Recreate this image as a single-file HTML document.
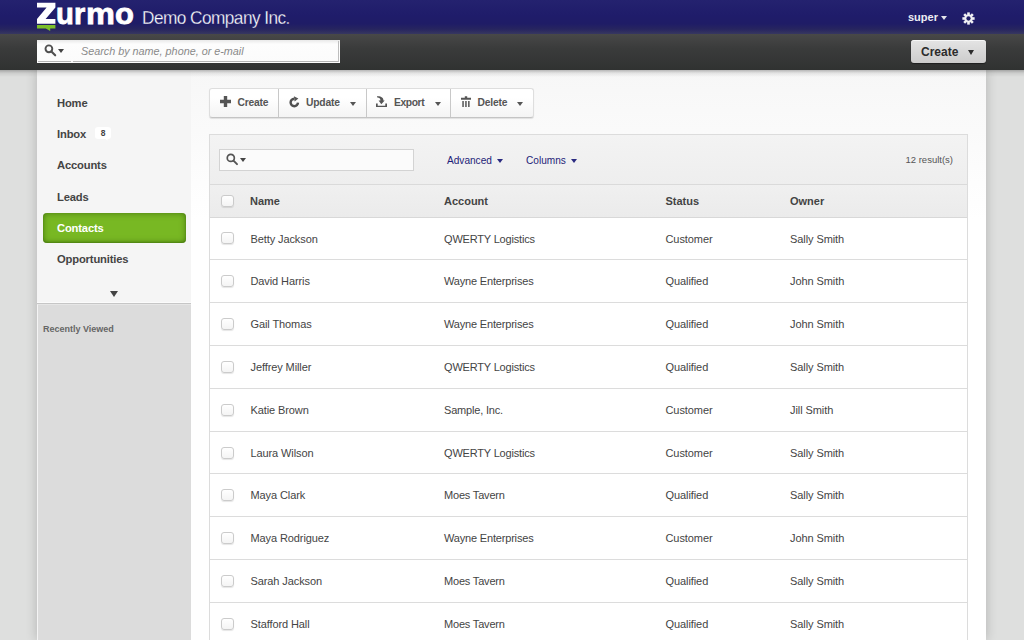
<!DOCTYPE html>
<html>
<head>
<meta charset="utf-8">
<title>Contacts</title>
<style>
*{box-sizing:border-box;margin:0;padding:0}
html,body{width:1024px;height:640px;overflow:hidden}
body{background:#dedfde;font-family:"Liberation Sans",sans-serif;font-size:11px;color:#444;position:relative}
.abs{position:absolute}
#blue{left:0;top:0;width:1024px;height:34px;background:linear-gradient(#24226f 0%,#1f1c6a 45%,#1f1c66 70%,#27255f 86%,#373760 100%)}
#dark{left:0;top:34px;width:1024px;height:36px;background:linear-gradient(#484848 0%,#3a3b3b 40%,#303231 100%)}
#hshadow{left:0;top:70px;width:1024px;height:7px;background:linear-gradient(rgba(0,0,0,.26),rgba(0,0,0,.08) 45%,rgba(0,0,0,0));z-index:5}
#wrap{left:37px;top:70px;width:949px;height:570px;background:#fff;box-shadow:0 0 11px rgba(0,0,0,.2)}
#maingrad{left:191px;top:70px;width:795px;height:150px;background:linear-gradient(#f7f7f7,#fafafa 40%,#fff)}
#side{left:37px;top:70px;width:154px;height:233px;background:#f5f5f5}
#sideline{left:37px;top:302px;width:154px;height:2px;background:linear-gradient(#fbfbfb 0,#fbfbfb 50%,#c6c6c6 50%,#c6c6c6 100%)}
#side2{left:37px;top:304px;width:154px;height:336px;background:#dcdcdc;border-left:1px solid #f4f4f4;border-top:1px solid #e6e6e6}
.nav{left:57px;font-weight:bold;font-size:11.2px;letter-spacing:-.15px;color:#444;white-space:nowrap;line-height:14px}
#active{left:43px;top:213px;width:143px;height:30px;border-radius:4px;background:#78b823;box-shadow:inset 0 0 6px rgba(40,80,0,.6),inset 0 -1px 2px rgba(40,80,0,.35)}
#badge{left:95px;top:127px;width:16px;height:12px;background:#fff;border-radius:3px;font-size:8.5px;font-weight:bold;color:#444;text-align:center;line-height:12px}
#rv{left:43px;top:324px;font-size:9px;font-weight:bold;color:#666;white-space:nowrap;line-height:11px}
/* logo */
.lt{top:-3.5px;font-weight:bold;color:#fff;font-size:29.8px;line-height:33px;white-space:nowrap;-webkit-text-stroke:.8px #fff;transform-origin:0 0}
#company{left:142px;top:7px;color:#fff;font-size:18.6px;line-height:22px;white-space:nowrap;letter-spacing:-.6px;transform-origin:0 0;transform:scaleX(.928);-webkit-text-stroke:.3px #211e6e}
#user{left:908px;top:11px;color:#ececf2;font-weight:bold;font-size:11px;line-height:13px;white-space:nowrap}
/* search */
#gs{left:37px;top:40px;width:303px;height:23px;background:linear-gradient(#e9e9e9,#fdfdfd 18%,#fbfbfb)}
#gsline{left:38px;top:41px;width:301px;height:21px;border-bottom:1px solid #b4b4b4;border-right:1px solid #bdbdbd}
#gsdiv{left:71px;top:61px;width:2px;height:1px;background:#f4f4f4}
#gstxt{left:81px;top:44px;font-style:italic;font-size:10.8px;color:#8a8a8a;white-space:nowrap;line-height:14px}
#createbtn{left:911px;top:40px;width:75px;height:23px;border-radius:3px;background:linear-gradient(#e4e4e4,#cccccc);box-shadow:0 1px 1px rgba(0,0,0,.4),inset 0 1px 0 rgba(255,255,255,.7)}
#createtxt{left:921px;top:45px;font-weight:bold;font-size:12px;color:#2c2c2c;line-height:15px;white-space:nowrap}
/* toolbar */
#tb{left:209px;top:88px;width:325px;height:30px;background:linear-gradient(#fff 30%,#f4f4f4);border:1px solid #dedede;border-bottom-color:#c4c4c4;border-radius:3px;box-shadow:0 1px 1px rgba(0,0,0,.1)}
.tbdiv{top:89px;width:1px;height:28px;background:#c8c8c8}
.tbt{top:96.3px;font-weight:bold;font-size:10.3px;letter-spacing:-.2px;color:#555;line-height:13px;white-space:nowrap}
.car{width:0;height:0;border-left:3px solid transparent;border-right:3px solid transparent;border-top:4px solid #555}
/* panel */
#panel{left:209px;top:134px;width:759px;height:506px;background:#fff;border:1px solid #dcdcdc;border-bottom:none}
#psearch{left:210px;top:135px;width:757px;height:49px;background:linear-gradient(#f3f3f3,#eeeeee)}
#pline{left:210px;top:184px;width:757px;height:1px;background:#dadada}
#phead{left:210px;top:185px;width:757px;height:32px;background:linear-gradient(#f0f0f0,#ebebeb)}
#pline2{left:210px;top:217px;width:757px;height:1px;background:#d8d8d8}
#pin{left:219px;top:149px;width:195px;height:22px;background:#fbfbfb;border:1px solid #d3d3d3}
.lnk{top:154px;color:#1d1d78;font-size:10.1px;line-height:13px;white-space:nowrap}
.carb{width:0;height:0;border-left:3px solid transparent;border-right:3px solid transparent;border-top:4px solid #2a2a80}
#res{left:905.5px;top:153px;font-size:9.5px;color:#555;line-height:13px;white-space:nowrap}
.th{top:195px;font-weight:bold;font-size:11px;color:#444;line-height:13px;white-space:nowrap}
.td{font-size:11px;color:#444;line-height:13px;white-space:nowrap}
.rl{left:210px;width:757px;height:1px;background:#dcdcdc}
.cb{left:221px;width:13px;height:12px;border:1px solid #cbcbcb;border-radius:3px;background:linear-gradient(#fff,#f4f4f4);box-shadow:0 1px 1px rgba(0,0,0,.1)}
</style>
</head>
<body>
<div class="abs" id="wrap"></div>
<div class="abs" id="maingrad"></div>
<div class="abs" id="side"></div>
<div class="abs" id="side2"></div>
<div class="abs" id="sideline"></div>
<div class="abs" id="blue"></div>
<div class="abs" id="dark"></div>
<div class="abs" id="hshadow"></div>

<!-- logo -->
<svg class="abs" style="left:36px;top:0" width="22" height="34" viewBox="36 0 22 34"><path d="M37 2.8H55.4V7.5L45.6 19H55.4V23.8H37V18.9L46.6 7.5H37Z" fill="#fff"/><path d="M37 25H55.4V28.4H50.2V31L45.8 28.4H37Z" fill="#7cc02a"/></svg>
<div class="abs lt" style="left:56.3px;transform:scaleX(.98)">u</div><div class="abs lt" style="left:73.6px;transform:scaleX(.97)">r</div><div class="abs lt" style="left:86.4px;transform:scaleX(1.09)">m</div><div class="abs lt" style="left:114.6px;transform:scaleX(1.04)">o</div>
<div class="abs" id="company">Demo Company Inc.</div>
<div class="abs" id="user">super</div>
<div class="abs car" style="left:941.3px;top:16px;border-top-color:#e4e4ea"></div>
<svg class="abs" id="gear" style="left:962px;top:12.2px" width="13" height="13" viewBox="0 0 14 14"><g fill="#f0f0f4"><circle cx="7" cy="7" r="4.4"/><rect x="5.6" y="0.4" width="2.8" height="13.2"/><rect x="5.6" y="0.4" width="2.8" height="13.2" transform="rotate(45 7 7)"/><rect x="5.6" y="0.4" width="2.8" height="13.2" transform="rotate(90 7 7)"/><rect x="5.6" y="0.4" width="2.8" height="13.2" transform="rotate(135 7 7)"/></g><circle cx="7" cy="7" r="2.3" fill="#211f69"/></svg>

<!-- global search -->
<div class="abs" id="gs"></div><div class="abs" id="gsline"></div>
<div class="abs" id="gsdiv"></div>
<svg class="abs" style="left:44px;top:44px" width="13" height="13" viewBox="0 0 13 13"><circle cx="4.9" cy="4.8" r="3.4" fill="none" stroke="#505050" stroke-width="1.9"/><path d="M7.4 7.4L11.2 11.3" stroke="#505050" stroke-width="2.1" stroke-linecap="round"/></svg>
<div class="abs car" style="left:58px;top:49px;border-top-color:#444"></div>
<div class="abs" id="gstxt">Search by name, phone, or e-mail</div>
<div class="abs" id="createbtn"></div>
<div class="abs" id="createtxt">Create</div>
<div class="abs car" style="left:967.5px;top:50px;border-left-width:3.5px;border-right-width:3.5px;border-top:5px solid #2c2c2c"></div>

<!-- sidebar -->
<div class="abs nav" style="top:96px">Home</div>
<div class="abs nav" style="top:127px">Inbox</div>
<div class="abs" id="badge">8</div><svg class="abs" style="left:104px;top:138px" width="4" height="3" viewBox="0 0 4 3"><path d="M0 0H3.6V2.6Z" fill="#fff"/></svg>
<div class="abs nav" style="top:158px">Accounts</div>
<div class="abs nav" style="top:190px">Leads</div>
<div class="abs" id="active"></div>
<div class="abs nav" style="top:221px;color:#fff">Contacts</div>
<div class="abs nav" style="top:252px">Opportunities</div>
<div class="abs car" style="left:110px;top:291px;border-left-width:4px;border-right-width:4px;border-top:6px solid #444"></div>
<div class="abs" id="rv">Recently Viewed</div>

<!-- toolbar -->
<div class="abs" id="tb"></div>
<div class="abs tbdiv" style="left:278px"></div>
<div class="abs tbdiv" style="left:366px"></div>
<div class="abs tbdiv" style="left:450px"></div>
<svg class="abs" style="left:220px;top:96px" width="11" height="11" viewBox="0 0 11 11"><path d="M3.8 0H7.2V3.8H11V7.2H7.2V11H3.8V7.2H0V3.8H3.8Z" fill="#555"/></svg>
<div class="abs tbt" style="left:237.5px">Create</div>
<svg class="abs" style="left:288.5px;top:95.5px" width="11" height="12" viewBox="0 0 11 12"><path d="M9 6.6A3.7 3.7 0 1 1 5.2 2.8" fill="none" stroke="#505050" stroke-width="2.4"/><path d="M4.9 0.2L9.4 2.5L5.6 5.4Z" fill="#555"/></svg>
<div class="abs tbt" style="left:306px">Update</div>
<div class="abs car" style="left:350px;top:102px"></div>
<svg class="abs" style="left:376px;top:95.5px" width="11" height="11.5" viewBox="0 0 11 11.5"><path d="M0 7.6V11.4H11V7.6H9.3V9.7H1.7V7.6Z" fill="#555"/><path d="M1 0.3C5 0 7.6 1.6 7.4 4.6H8.7L5.3 8.3L2.6 4.6H4.4C4.5 2.7 3.4 1.5 1 1.2Z" fill="#555"/></svg>
<div class="abs tbt" style="left:394px;letter-spacing:-.4px">Export</div>
<div class="abs car" style="left:435px;top:102px"></div>
<svg class="abs" style="left:461px;top:96px" width="10" height="11" viewBox="0 0 10 11"><path d="M0 1.8H3.8V0.3H6.2V1.8H10V3.8H0Z" fill="#555"/><path d="M1.3 5H2.8V11H1.3ZM4.2 5H5.7V11H4.2ZM7.1 5H8.6V11H7.1Z" fill="#555"/></svg>
<div class="abs tbt" style="left:477.5px">Delete</div>
<div class="abs car" style="left:517px;top:102px"></div>

<!-- panel -->
<div class="abs" id="panel"></div>
<div class="abs" id="psearch"></div>
<div class="abs" id="pline"></div>
<div class="abs" id="phead"></div>
<div class="abs" id="pline2"></div>
<div class="abs" id="pin"></div>
<svg class="abs" style="left:226px;top:153px" width="13" height="13" viewBox="0 0 13 13"><circle cx="4.8" cy="4.9" r="3.55" fill="none" stroke="#555" stroke-width="1.7"/><path d="M7.5 7.6L11 11.1" stroke="#555" stroke-width="2" stroke-linecap="round"/></svg>
<div class="abs car" style="left:240px;top:158px;border-top-color:#444"></div>
<div class="abs lnk" style="left:447px">Advanced</div>
<div class="abs carb" style="left:497px;top:159px"></div>
<div class="abs lnk" style="left:526px">Columns</div>
<div class="abs carb" style="left:570.5px;top:159px"></div>
<div class="abs" id="res">12 result(s)</div>

<div class="abs cb" style="top:195px"></div>
<div class="abs th" style="left:250px">Name</div>
<div class="abs th" style="left:444px">Account</div>
<div class="abs th" style="left:665.5px">Status</div>
<div class="abs th" style="left:790px">Owner</div>

<div class="abs cb" style="top:232px"></div>
<div class="abs td" style="left:250.5px;top:233px;letter-spacing:-0.1px">Betty Jackson</div>
<div class="abs td" style="left:444px;top:233px;letter-spacing:-0.18px">QWERTY Logistics</div>
<div class="abs td" style="left:665.5px;top:233px;letter-spacing:-0.08px">Customer</div>
<div class="abs td" style="left:790px;top:233px;letter-spacing:-0.08px">Sally Smith</div>
<div class="abs rl" style="top:259px"></div>
<div class="abs cb" style="top:275px"></div>
<div class="abs td" style="left:250.5px;top:275px;letter-spacing:-0.1px">David Harris</div>
<div class="abs td" style="left:444px;top:275px;letter-spacing:-0.18px">Wayne Enterprises</div>
<div class="abs td" style="left:665.5px;top:275px;letter-spacing:-0.08px">Qualified</div>
<div class="abs td" style="left:790px;top:275px;letter-spacing:-0.08px">John Smith</div>
<div class="abs rl" style="top:302px"></div>
<div class="abs cb" style="top:318px"></div>
<div class="abs td" style="left:250.5px;top:318px;letter-spacing:-0.1px">Gail Thomas</div>
<div class="abs td" style="left:444px;top:318px;letter-spacing:-0.18px">Wayne Enterprises</div>
<div class="abs td" style="left:665.5px;top:318px;letter-spacing:-0.08px">Qualified</div>
<div class="abs td" style="left:790px;top:318px;letter-spacing:-0.08px">John Smith</div>
<div class="abs rl" style="top:345px"></div>
<div class="abs cb" style="top:361px"></div>
<div class="abs td" style="left:250.5px;top:361px;letter-spacing:-0.1px">Jeffrey Miller</div>
<div class="abs td" style="left:444px;top:361px;letter-spacing:-0.18px">QWERTY Logistics</div>
<div class="abs td" style="left:665.5px;top:361px;letter-spacing:-0.08px">Qualified</div>
<div class="abs td" style="left:790px;top:361px;letter-spacing:-0.08px">Sally Smith</div>
<div class="abs rl" style="top:388px"></div>
<div class="abs cb" style="top:404px"></div>
<div class="abs td" style="left:250.5px;top:404px;letter-spacing:-0.1px">Katie Brown</div>
<div class="abs td" style="left:444px;top:404px;letter-spacing:-0.18px">Sample, Inc.</div>
<div class="abs td" style="left:665.5px;top:404px;letter-spacing:-0.08px">Customer</div>
<div class="abs td" style="left:790px;top:404px;letter-spacing:-0.08px">Jill Smith</div>
<div class="abs rl" style="top:431px"></div>
<div class="abs cb" style="top:447px"></div>
<div class="abs td" style="left:250.5px;top:447px;letter-spacing:-0.1px">Laura Wilson</div>
<div class="abs td" style="left:444px;top:447px;letter-spacing:-0.18px">QWERTY Logistics</div>
<div class="abs td" style="left:665.5px;top:447px;letter-spacing:-0.08px">Customer</div>
<div class="abs td" style="left:790px;top:447px;letter-spacing:-0.08px">Sally Smith</div>
<div class="abs rl" style="top:473px"></div>
<div class="abs cb" style="top:489px"></div>
<div class="abs td" style="left:250.5px;top:489px;letter-spacing:-0.1px">Maya Clark</div>
<div class="abs td" style="left:444px;top:489px;letter-spacing:-0.18px">Moes Tavern</div>
<div class="abs td" style="left:665.5px;top:489px;letter-spacing:-0.08px">Qualified</div>
<div class="abs td" style="left:790px;top:489px;letter-spacing:-0.08px">Sally Smith</div>
<div class="abs rl" style="top:516px"></div>
<div class="abs cb" style="top:532px"></div>
<div class="abs td" style="left:250.5px;top:532px;letter-spacing:-0.1px">Maya Rodriguez</div>
<div class="abs td" style="left:444px;top:532px;letter-spacing:-0.18px">Wayne Enterprises</div>
<div class="abs td" style="left:665.5px;top:532px;letter-spacing:-0.08px">Customer</div>
<div class="abs td" style="left:790px;top:532px;letter-spacing:-0.08px">John Smith</div>
<div class="abs rl" style="top:559px"></div>
<div class="abs cb" style="top:575px"></div>
<div class="abs td" style="left:250.5px;top:575px;letter-spacing:-0.1px">Sarah Jackson</div>
<div class="abs td" style="left:444px;top:575px;letter-spacing:-0.18px">Moes Tavern</div>
<div class="abs td" style="left:665.5px;top:575px;letter-spacing:-0.08px">Qualified</div>
<div class="abs td" style="left:790px;top:575px;letter-spacing:-0.08px">Sally Smith</div>
<div class="abs rl" style="top:602px"></div>
<div class="abs cb" style="top:618px"></div>
<div class="abs td" style="left:250.5px;top:618px;letter-spacing:-0.1px">Stafford Hall</div>
<div class="abs td" style="left:444px;top:618px;letter-spacing:-0.18px">Moes Tavern</div>
<div class="abs td" style="left:665.5px;top:618px;letter-spacing:-0.08px">Qualified</div>
<div class="abs td" style="left:790px;top:618px;letter-spacing:-0.08px">Sally Smith</div>
</body>
</html>
